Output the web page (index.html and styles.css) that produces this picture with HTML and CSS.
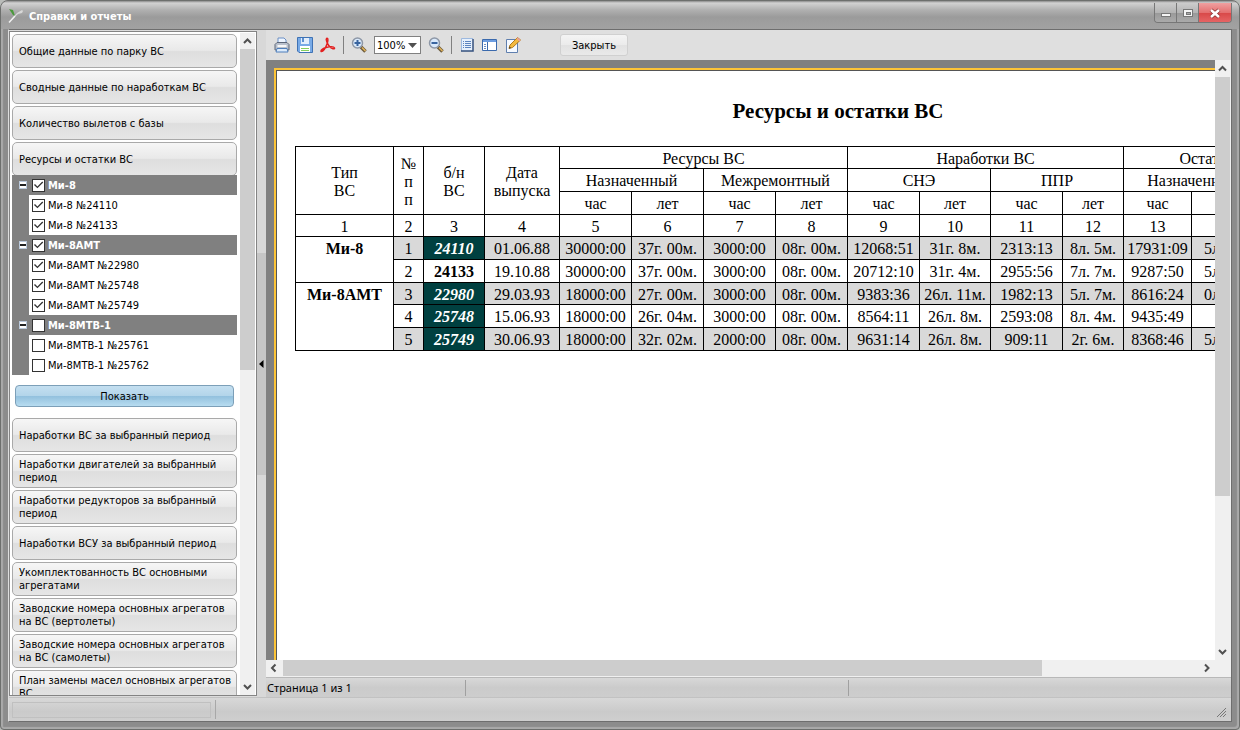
FILE: index.html
```html
<!DOCTYPE html>
<html lang="ru">
<head>
<meta charset="utf-8">
<title>Справки и отчеты</title>
<link rel="stylesheet" href="styles.css">
</head>
<body>
<div class="window">
  <header class="titlebar">
    <svg class="app-icon" width="16" height="16" viewBox="0 0 16 16"><path d="M1 1l4 1 2 6-2-1z" fill="#4b9a3c"/><path d="M1 14L9 5l5-3 1 1-1 2-4 1z" fill="#d8d8d8"/><path d="M1 14.500L7 8" stroke="#f2f2f2" stroke-width="1.500"/></svg>
    <h1 class="title">Справки и отчеты</h1>
    <div class="winbuttons">
      <button class="winbtn" aria-label="Свернуть"><svg width="20" height="18" viewBox="0 0 20 18"><rect x="5.500" y="9.500" width="9" height="3" fill="#f4f4f4" stroke="#777"/></svg></button>
      <button class="winbtn" aria-label="Развернуть"><svg width="20" height="18" viewBox="0 0 20 18"><rect x="5.500" y="5.500" width="9" height="7" fill="#f4f4f4" stroke="#777"/><rect x="8.500" y="8.500" width="4" height="2" fill="#aaa" stroke="#777"/></svg></button>
      <button class="winbtn close" aria-label="Закрыть окно"><svg width="20" height="18" viewBox="0 0 20 18"><path d="M6 6l8 7M14 6l-8 7" stroke="#8a3030" stroke-width="4"/><path d="M6 6l8 7M14 6l-8 7" stroke="#fff" stroke-width="2.500"/></svg></button>
    </div>
  </header>
  <div class="client">
    <div class="workspace">
      <nav class="sidebar">
        <div class="menu">
          <button class="item">Общие данные по парку ВС</button>
          <button class="item">Сводные данные по наработкам ВС</button>
          <button class="item">Количество вылетов с базы</button>
          <button class="item open">Ресурсы и остатки ВС</button>
          <div class="tree">
            <div class="group"><button class="fold" aria-label="Свернуть Ми-8"></button><label class="check"><input type="checkbox" checked>Ми-8</label></div>
            <label class="check leaf"><input type="checkbox" checked>Ми-8 №24110</label>
            <label class="check leaf"><input type="checkbox" checked>Ми-8 №24133</label>
            <div class="group"><button class="fold" aria-label="Свернуть Ми-8АМТ"></button><label class="check"><input type="checkbox" checked>Ми-8АМТ</label></div>
            <label class="check leaf"><input type="checkbox" checked>Ми-8АМТ №22980</label>
            <label class="check leaf"><input type="checkbox" checked>Ми-8АМТ №25748</label>
            <label class="check leaf"><input type="checkbox" checked>Ми-8АМТ №25749</label>
            <div class="group"><button class="fold" aria-label="Свернуть Ми-8МТВ-1"></button><label class="check"><input type="checkbox">Ми-8МТВ-1</label></div>
            <label class="check leaf"><input type="checkbox">Ми-8МТВ-1 №25761</label>
            <label class="check leaf"><input type="checkbox">Ми-8МТВ-1 №25762</label>
          </div>
          <button class="show">Показать</button>
          <button class="item">Наработки ВС за выбранный период</button>
          <button class="item">Наработки двигателей за выбранный период</button>
          <button class="item">Наработки редукторов за выбранный период</button>
          <button class="item">Наработки ВСУ за выбранный период</button>
          <button class="item">Укомплектованность ВС основными агрегатами</button>
          <button class="item">Заводские номера основных агрегатов на ВС (вертолеты)</button>
          <button class="item">Заводские номера основных агрегатов на ВС (самолеты)</button>
          <button class="item">План замены масел основных агрегатов ВС</button>
        </div>
        <div class="vscroll">
          <svg class="arrow" width="15" height="16" viewBox="0 0 15 16"><path d="M4 10l3.500-3.500L11 10" /></svg>
          <div class="track"><div class="thumb menu-thumb"></div></div>
          <svg class="arrow" width="15" height="16" viewBox="0 0 15 16"><path d="M4 6l3.500 3.500L11 6" /></svg>
        </div>
      </nav>
      <div class="splitter"><button class="grip" aria-label="Скрыть панель"><svg width="5" height="8" viewBox="0 0 5 8"><path d="M4.500 0v8L0 4z"/></svg></button></div>
      <main class="report">
        <div class="toolbar">
          <button class="tool" aria-label="Печать"><svg width="16" height="16" viewBox="0 0 16 16"><path d="M4 7V1h6l2 2v4" fill="#eef5ff" stroke="#6b8fc4"/><path d="M1 7.500l2-2h10l2 2V13H1z" fill="#b9c0cc" stroke="#5c6678"/><path d="M3.500 9h9" stroke="#f7f7f7" stroke-width="2"/><path d="M3 11.500h10l1 3.500H2z" fill="#dcebfb" stroke="#4f7fbc"/></svg></button>
          <button class="tool" aria-label="Сохранить"><svg width="16" height="16" viewBox="0 0 16 16"><path d="M.500.500h15v15H2l-1.500-1.500z" fill="#78aae6" stroke="#3f72b4"/><path d="M4 1h8v6H4z" fill="#e3eefb"/><path d="M5 1h2v4H5z" fill="#5c8fd0"/><path d="M3 9h10v6H3z" fill="#fff"/><path d="M4 11.500h8M4 13.500h8" stroke="#84cf5e"/></svg></button>
          <button class="tool" aria-label="Экспорт в PDF"><svg width="16" height="16" viewBox="0 0 16 16" fill="none" stroke="#e32020" stroke-width="1.500"><path d="M6.500 1.500c2-1 1.500 3 .500 5.500C5.500 11 3 14.500 1.500 14.500S2 11.500 6 10.500s8-1 8.500.500-3 1-5-1.500-4-7-3-8z"/></svg></button>
          <span class="sep"></span>
          <button class="tool" aria-label="Увеличить"><svg width="16" height="16" viewBox="0 0 16 16"><path d="M10 10l4.500 4.500" stroke="#6b5a3c" stroke-width="3.500"/><path d="M11 10.500l3.500 3.500" stroke="#e2b45a" stroke-width="1.500"/><circle cx="6.500" cy="6" r="5" fill="#d9e9fb" stroke="#8d97a6" stroke-width="1.500"/><path d="M3.500 6h6M6.500 3v6" stroke="#38649f" stroke-width="2"/></svg></button>
          <select class="zoom" aria-label="Масштаб"><option>100%</option></select>
          <button class="tool" aria-label="Уменьшить"><svg width="16" height="16" viewBox="0 0 16 16"><path d="M10 10l4.500 4.500" stroke="#6b5a3c" stroke-width="3.500"/><path d="M11 10.500l3.500 3.500" stroke="#e2b45a" stroke-width="1.500"/><circle cx="6.500" cy="6" r="5" fill="#d9e9fb" stroke="#8d97a6" stroke-width="1.500"/><path d="M3.500 6h6" stroke="#38649f" stroke-width="2"/></svg></button>
          <span class="sep"></span>
          <button class="tool" aria-label="Структура"><svg width="16" height="16" viewBox="0 0 16 16"><path d="M2 2h12v12H2z" fill="#e6f0fc"/><path d="M2.500 14V1.500H14" fill="none" stroke="#9db9df"/><path d="M14 2v12H2" fill="none" stroke="#34507e" stroke-width="1.500"/><path d="M4 4.500h1M4 6.500h1M4 8.500h1M4 10.500h1M6 4.500h6M6 6.500h6M6 8.500h6M6 10.500h6" stroke="#5c84bf"/></svg></button>
          <button class="tool" aria-label="Эскизы"><svg width="16" height="16" viewBox="0 0 16 16"><path d="M.500 2.500h14v11H.500z" fill="#fff" stroke="#3b6aad"/><path d="M1 3h13v2H1z" fill="#6d9de0"/><path d="M5.500 5v8" stroke="#3b6aad"/><path d="M2 7.500h2M2 9.500h2M2 11.500h2" stroke="#6a8fc6"/></svg></button>
          <button class="tool" aria-label="Правка"><svg width="16" height="16" viewBox="0 0 16 16"><path d="M1.500 2.500h11v13h-11z" fill="#f5f9ff" stroke="#5f7fae"/><path d="M4 11.500l1-3.500 7.500-7.500L15.500 3 7.500 10.500z" fill="#f3b93f" stroke="#b27a1d"/><path d="M11.500 1.500l1-1L15.500 3l-1 1.500z" fill="#eda0a0"/><path d="M4 11.500l.500-2 1.500 1.500z" fill="#333"/></svg></button>
          <button class="closebtn">Закрыть</button>
        </div>
        <div class="viewer">
          <div class="canvas">
            <article class="page">
              <h2 class="heading">Ресурсы и остатки ВС</h2>
              <table class="grid">
                <colgroup><col class="w98"><col class="w30"><col class="w61"><col class="w75"><col class="w72" span="5"><col class="w71"><col class="w72"><col class="w61"><col class="w68"><col class="w71"><col class="w61"><col class="w58"></colgroup>
                <thead>
                  <tr class="low"><th rowspan="3">Тип<br>ВС</th><th rowspan="3">№<br>п<br>п</th><th rowspan="3">б/н<br>ВС</th><th rowspan="3">Дата<br>выпуска</th><th colspan="4">Ресурсы ВС</th><th colspan="4">Наработки ВС</th><th colspan="4">Остатки ресурсов ВС</th></tr>
                  <tr><th colspan="2">Назначенный</th><th colspan="2">Межремонтный</th><th colspan="2">СНЭ</th><th colspan="2">ППР</th><th colspan="2">Назначенный</th><th colspan="2">Межремонтный</th></tr>
                  <tr><th>час</th><th>лет</th><th>час</th><th>лет</th><th>час</th><th>лет</th><th>час</th><th>лет</th><th>час</th><th>лет</th><th>час</th><th>лет</th></tr>
                  <tr class="low"><th>1</th><th>2</th><th>3</th><th>4</th><th>5</th><th>6</th><th>7</th><th>8</th><th>9</th><th>10</th><th>11</th><th>12</th><th>13</th><th>14</th><th>15</th><th>16</th></tr>
                </thead>
                <tbody>
                  <tr class="shade"><td class="type" rowspan="2">Ми-8</td><td>1</td><td class="mark">24110</td><td>01.06.88</td><td>30000:00</td><td>37г. 00м.</td><td>3000:00</td><td>08г. 00м.</td><td>12068:51</td><td>31г. 8м.</td><td>2313:13</td><td>8л. 5м.</td><td>17931:09</td><td>5л. 4м.</td><td></td><td></td></tr>
                  <tr><td>2</td><td class="num">24133</td><td>19.10.88</td><td>30000:00</td><td>37г. 00м.</td><td>3000:00</td><td>08г. 00м.</td><td>20712:10</td><td>31г. 4м.</td><td>2955:56</td><td>7л. 7м.</td><td>9287:50</td><td>5л. 8м.</td><td></td><td></td></tr>
                  <tr class="shade low"><td class="type" rowspan="3">Ми-8АМТ</td><td>3</td><td class="mark">22980</td><td>29.03.93</td><td>18000:00</td><td>27г. 00м.</td><td>3000:00</td><td>08г. 00м.</td><td>9383:36</td><td>26л. 11м.</td><td>1982:13</td><td>5л. 7м.</td><td>8616:24</td><td>0л. 1м.</td><td></td><td></td></tr>
                  <tr><td>4</td><td class="mark">25748</td><td>15.06.93</td><td>18000:00</td><td>26г. 04м.</td><td>3000:00</td><td>08г. 00м.</td><td>8564:11</td><td>26л. 8м.</td><td>2593:08</td><td>8л. 4м.</td><td>9435:49</td><td></td><td></td><td></td></tr>
                  <tr class="shade"><td>5</td><td class="mark">25749</td><td>30.06.93</td><td>18000:00</td><td>32г. 02м.</td><td>2000:00</td><td>08г. 00м.</td><td>9631:14</td><td>26л. 8м.</td><td>909:11</td><td>2г. 6м.</td><td>8368:46</td><td>5л. 6м.</td><td></td><td></td></tr>
                </tbody>
              </table>
            </article>
          </div>
          <div class="vscroll">
            <svg class="arrow" width="15" height="17" viewBox="0 0 15 17"><path d="M4 10.500L7.500 7l3.500 3.500" /></svg>
            <div class="track"><div class="thumb page-thumb"></div></div>
            <svg class="arrow" width="15" height="17" viewBox="0 0 15 17"><path d="M4 7l3.500 3.500L11 7" /></svg>
          </div>
          <div class="hscroll">
            <svg class="arrow" width="17" height="16" viewBox="0 0 17 16"><path d="M9.500 4.500L6 8l3.500 3.500" /></svg>
            <div class="track"><div class="thumb wide-thumb"></div></div>
            <svg class="arrow" width="17" height="16" viewBox="0 0 17 16"><path d="M7 4.500L10.500 8 7 11.500" /></svg>
          </div>
        </div>
        <div class="pagebar"><span class="pane">Страница 1 из 1</span><span class="pane wide"></span></div>
      </main>
    </div>
    <footer class="statusbar">
      <div class="well"></div><span class="line"></span>
      <svg class="resize" width="11" height="11" viewBox="0 0 11 11"><path d="M1 10L10 1M4 10l6-6M7 10l3-3" stroke="#777"/></svg>
    </footer>
  </div>
</div>
</body>
</html>
```
FILE: styles.css
```css
* { box-sizing: border-box; }
body { margin: 0; background: #b9bcb9; font: 11px/13px "DejaVu Sans Condensed", "DejaVu Sans", sans-serif; color: #000; }
button { font: inherit; color: inherit; padding: 0; margin: 0; border: 0; background: none; }
svg { display: block; }

.window { height: 100vh; padding: 0 7px 7px; display: flex; flex-direction: column; overflow: hidden; border: 1px solid #6d6f6d; border-radius: 8px 8px 4px 4px; background: #8c8c8c; box-shadow: inset 2px 0 1px #aaa, inset -2px -2px 1px #aaa; }
.titlebar { flex: none; height: 28px; margin: 0 -7px; padding: 2px 7px 0; display: flex; align-items: center; gap: 5px; background: linear-gradient(#8c8c8c 0, #d2d2d2 2px, #b0b0b0 9px, #9b9b9b 16px, #a2a2a2); }
.title { flex: 1; margin: 0; font-size: 11px; font-weight: bold; color: #fff; }
.winbuttons { align-self: flex-start; display: flex; height: 20px; border: 1px solid #777; border-top: 0; border-radius: 0 0 4px 4px; overflow: hidden; }
.winbtn { width: 22px; display: flex; align-items: center; justify-content: center; border-right: 1px solid #777; background: linear-gradient(#ccc, #b4b4b4 50%, #999 52%, #aaa); }
.winbtn.close { width: 32px; border-right: 0; background: linear-gradient(#efa0a0, #e47070 50%, #d84848 52%, #e66464); }

.client { flex: 1; min-height: 0; display: flex; flex-direction: column; border: 1px solid #6e6e6e; border-left-color: #ddd; background: #dcdcdc; }
.workspace { flex: 1; min-height: 0; display: flex; }

.sidebar { flex: none; width: 248px; margin: 1px 0; padding: 1px 1px 0 2px; display: flex; gap: 3px; border: 1px solid #848484; background: #fff; overflow: hidden; }
.menu { flex: 1; min-width: 0; padding-top: 1px; display: flex; flex-direction: column; gap: 2px; overflow: hidden; }
.item { flex: none; height: 34px; padding: 0 0 0 6px; text-align: left; border: 1px solid #a9a9a9; border-radius: 5px; background: linear-gradient(#f6f6f6, #e9e9e9 48%, #dedede 52%, #e6e6e6); }
.item.open { margin-bottom: -3px; }
.tree { flex: none; position: relative; padding-left: 17px; background: #808080; }
.check { display: flex; align-items: center; gap: 3px; height: 20px; padding-left: 3px; white-space: nowrap; }
.leaf { background: #fff; }
.group { display: flex; align-items: center; height: 20px; margin-left: -17px; padding-left: 7px; gap: 2px; color: #fff; font-weight: bold; }
.fold { width: 8px; height: 8px; border: 1px solid #b9c8da; background: linear-gradient(#fff 2px, #222 2px, #222 4px, #fff 4px); }
.check input { appearance: none; flex: none; width: 13px; height: 13px; margin: 0; border: 1px solid #333; background: #fff; }
.check input:checked::before { content: ""; display: block; height: 11px; background: #333; clip-path: polygon(9% 50%, 18% 41%, 40% 64%, 84% 18%, 93% 27%, 40% 80%); }
.show { flex: none; height: 22px; margin: 8px 3px 9px; border: 1px solid #7c9fb8; border-radius: 4px; background: linear-gradient(#c4dff0, #b3d5ea 48%, #93c1de 52%, #b7dcf0); }

.vscroll { flex: none; width: 15px; display: flex; flex-direction: column; background: #f0f0f0; }
.arrow { flex: none; fill: none; stroke: #505050; stroke-width: 2; background: #f0f0f0; }
.track { flex: 1; min-height: 0; min-width: 0; }
.thumb { background: #cdcdcd; }
.menu-thumb { height: 51%; }
.page-thumb { height: 74%; }
.wide-thumb { width: 83%; height: 100%; }

.splitter { flex: none; width: 9px; display: flex; align-items: center; background: #d8d8d8; }
.grip { width: 9px; height: 222px; display: flex; align-items: center; justify-content: center; background: #c6c6c6; }

.report { flex: 1; min-width: 0; display: flex; flex-direction: column; }
.toolbar { flex: none; height: 30px; padding-left: 8px; display: flex; align-items: center; gap: 7px; background: #dfdfdf; }
.tool { width: 16px; height: 16px; }
.sep { width: 1px; height: 18px; background: #808080; }
.zoom { appearance: none; width: 47px; height: 18px; padding: 0 2px; border: 1px solid #808080; border-radius: 0; font: inherit; color: #000; background: #fff url("data:image/svg+xml,%3Csvg xmlns='http://www.w3.org/2000/svg' width='9' height='5'%3E%3Cpath d='M0 0h9L4.500 5z' fill='%23505050'/%3E%3C/svg%3E") no-repeat right 3px center; }
.closebtn { width: 68px; height: 22px; margin-left: 32px; border: 1px solid #d0d0d0; border-radius: 3px; background: linear-gradient(#f4f4f4, #ebebeb 50%, #e2e2e2 52%, #e9e9e9); }

.viewer { flex: 1; min-height: 0; display: grid; grid-template: minmax(0, 1fr) 17px / minmax(0, 1fr) 16px; background: #f0f0f0; }
.canvas { overflow: hidden; padding: 8px 0 0 8px; background: #808080; }
.page { width: 1127px; min-height: 794px; padding: 29px 18px 29px 19px; border: 2px solid #fdc437; background: #fff; box-shadow: inset 1px 1px #555; font: 16px/18px "Liberation Serif", serif; }
.heading { margin: 0 0 23px; font-size: 21px; line-height: 24px; text-align: center; }
.grid { width: 1086px; table-layout: fixed; border-collapse: collapse; }
.grid th, .grid td { height: 23px; padding: 3px 0 1px; border: 1px solid #000; font-weight: normal; text-align: center; white-space: nowrap; }
.grid .low th, .grid .low td { height: 22px; padding: 3px 0 0; }
.grid .type { vertical-align: top; background: #fff; font-weight: bold; }
.grid .num { font-weight: bold; }
.grid .mark { background: #004040; color: #fff; font-weight: bold; font-style: italic; }
.shade { background: #d9d9d9; }
.w98 { width: 98px; }
.w30 { width: 30px; }
.w58 { width: 58px; }
.w61 { width: 61px; }
.w75 { width: 75px; }
.w72 { width: 72px; }
.w71 { width: 71px; }
.w68 { width: 68px; }
.hscroll { height: 16px; display: flex; background: #f0f0f0; }

.pagebar { flex: none; height: 20px; display: flex; align-items: center; border-top: 1px solid #b8b8b8; background: linear-gradient(#d8d8d8, #cbcbcb 50%, #cdcdcd); font: 11px/16px "Noto Sans", sans-serif; }
.pane { width: 200px; height: 16px; padding-left: 1px; border-right: 1px solid #a0a0a0; }
.pane.wide { width: 383px; }

.statusbar { flex: none; height: 24px; padding: 3px 4px 3px 3px; display: flex; align-items: center; gap: 4px; border-top: 1px solid #c2c2c2; background: linear-gradient(#d8d8d8, #cacaca 60%, #cfcfcf); }
.well { width: 199px; height: 16px; border: 1px solid #c0c0c0; }
.line { width: 1px; height: 19px; background: #a8a8a8; }
.resize { margin-left: auto; align-self: flex-end; }
```
